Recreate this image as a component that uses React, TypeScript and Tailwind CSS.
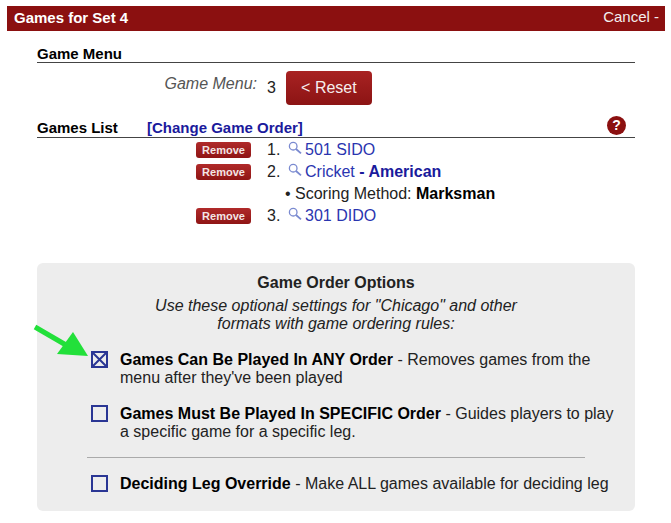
import React from 'react';

const games = [
  { n: '1.', name: '501 SIDO' },
  { n: '2.', name: 'Cricket', extra: ' - American' },
  { n: '3.', name: '301 DIDO' },
];

function Lens() {
  return (
    <svg width="14" height="14" viewBox="0 0 14 14" fill="none" className="shrink-0 -mt-[5px]">
      <circle cx="5.2" cy="5.2" r="3.8" stroke="#7a8ad0" strokeWidth="1.3" />
      <path d="M8 8 L13 12.4" stroke="#7a8ad0" strokeWidth="1.8" />
    </svg>
  );
}

function RemoveBtn() {
  return (
    <button className="w-[55px] h-[16px] rounded-[3px] bg-gradient-to-b from-[#b02a2a] to-[#8f1414] text-[#f3e6e6] text-[11px] font-bold leading-[16px] text-center">
      Remove
    </button>
  );
}

function Box({ checked }: { checked?: boolean }) {
  return (
    <svg width="17" height="17" viewBox="0 0 17 17" fill="none" className="shrink-0">
      <rect x="1" y="1" width="15" height="15" stroke="#2a3694" strokeWidth="2" />
      {checked && <path d="M2 2 L15 15 M15 2 L2 15" stroke="#2a3694" strokeWidth="2" />}
    </svg>
  );
}

function Option({ checked, title, text, className }: { checked?: boolean; title: string; text: React.ReactNode; className?: string }) {
  return (
    <div className={`flex ${className ?? ''}`}>
      <div className="w-[83px] pl-[54px] shrink-0"><Box checked={checked} /></div>
      <p className="text-[16px] leading-[18px] text-[#222]">
        <b className="text-black">{title}</b> {text}
      </p>
    </div>
  );
}

export default function App() {
  return (
    <div className="relative w-[671px] h-[523px] bg-white text-black font-['Liberation_Sans',Arial,sans-serif] overflow-hidden">
      <div className="pt-[6px] pl-[7px] pr-[6px]">
        <div className="h-[25px] bg-[#8b1010] flex items-center justify-between pl-[7px] pr-[6px] text-white">
          <span className="text-[15px] font-bold">Games for Set 4</span>
          <span className="text-[15px] text-[#f3eeee] -mt-[2px]">Cancel -</span>
        </div>
      </div>

      <div className="ml-[37px] mr-[36px] mt-[15px]">
        <div className="h-[17px] border-b border-[#444] text-[15px] font-bold leading-[16px]">Game Menu</div>

        <div className="h-[35px] mt-[8px] flex items-start">
          <span className="w-[220px] text-right italic text-[16px] text-[#555] leading-[20px] mt-[3px]">Game Menu:</span>
          <span className="ml-[10px] text-[16px] text-[#222] leading-[20px] mt-[7px]">3</span>
          <button className="ml-[10px] w-[86px] h-[34px] rounded-[4px] bg-gradient-to-b from-[#a82222] to-[#8c1414] text-[#f6eeee] text-[16px]">&lt; Reset</button>
        </div>

        <div className="relative h-[19px] mt-[13px] border-b border-[#444] flex items-start text-[15px] font-bold leading-[17px]">
          <span className="w-[110px]">Games List</span>
          <span className="text-[#1a1a9c]">[Change Game Order]</span>
          <span className="absolute right-[9px] -top-[3px] w-[19px] h-[19px] rounded-full bg-[#8b1010] text-white text-[14px] leading-[19px] text-center font-bold">?</span>
        </div>

        <div className="mt-[1px] text-[16px] leading-[22px] text-[#222]">
          {games.map((g) => (
            <React.Fragment key={g.n}>
              <div className="flex items-center h-[22px]">
                <div className="w-[214px] pl-[159px] shrink-0 flex"><RemoveBtn /></div>
                <span className="w-[21px] ml-[16px] shrink-0">{g.n}</span>
                <Lens />
                <span className="ml-[3px] text-[#2a35b0]">
                  {g.name}
                  {g.extra && <b className="text-[#1a1a9c]">{g.extra}</b>}
                </span>
              </div>
              {g.extra && (
                <div className="h-[22px] pl-[248px]">
                  • Scoring Method: <b className="text-black">Marksman</b>
                </div>
              )}
            </React.Fragment>
          ))}
        </div>
      </div>

      <div className="ml-[37px] mr-[36px] mt-[36px] h-[248px] rounded-[6px] bg-[#ededed]">
        <h3 className="pt-[11px] text-center text-[16px] font-bold leading-[18px] text-[#222]">Game Order Options</h3>
        <p className="mt-[5px] text-center italic text-[16px] leading-[18px] text-[#222]">
          Use these optional settings for "Chicago" and other
          <br />
          formats with game ordering rules:
        </p>
        <Option
          className="mt-[18px] pr-[11px]"
          checked
          title="Games Can Be Played In ANY Order"
          text="- Removes games from the menu after they've been played"
        />
        <Option
          className="mt-[18px] pr-[11px]"
          title="Games Must Be Played In SPECIFIC Order"
          text="- Guides players to play a specific game for a specific leg."
        />
        <div className="mt-[16px] mx-[50px] border-t border-[#aaa]" />
        <Option
          className="mt-[17px]"
          title="Deciding Leg Override"
          text="- Make ALL games available for deciding leg"
        />
      </div>

      {/* green arrow pointing at the first checkbox */}
      <svg width="60" height="40" viewBox="0 0 60 40" className="absolute left-[30px] top-[322px]">
        <path d="M5 5 L36 23" stroke="#22e03a" strokeWidth="5" />
        <path d="M27 32 L58 34 L43 10 Z" fill="#22e03a" />
      </svg>
    </div>
  );
}
